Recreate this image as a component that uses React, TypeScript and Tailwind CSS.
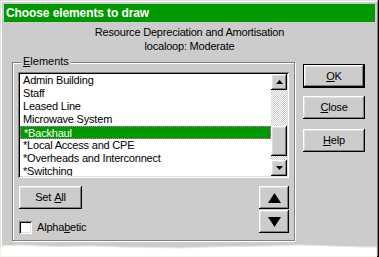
import React from "react";

const ITEMS = [
  "Admin Building",
  "Staff",
  "Leased Line",
  "Microwave System",
  "*Backhaul",
  "*Local Access and CPE",
  "*Overheads and Interconnect",
  "*Switching",
];
const SELECTED = 4;

const FONT = { fontFamily: '"Liberation Sans", Arial, sans-serif' };

// win95 bevels
const RAISED =
  "shadow-[inset_-1px_-1px_0_#000,inset_1px_1px_0_#fff,inset_-2px_-2px_0_#808080,inset_2px_2px_0_#dfdfdf]";
const SUNKEN =
  "shadow-[inset_1px_1px_0_#808080,inset_-1px_-1px_0_#fff,inset_2px_2px_0_#000,inset_-2px_-2px_0_#dfdfdf]";

function Btn({ children, className = "" }: { children: React.ReactNode; className?: string }) {
  return (
    <div
      className={`flex items-center justify-center bg-[#cccccc] text-[11px] tracking-[-0.2px] text-black ${RAISED} ${className}`}
    >
      {children}
    </div>
  );
}

function Tri({ up, w, h }: { up?: boolean; w: number; h: number }) {
  return (
    <svg width={w} height={h} viewBox={`0 0 ${w} ${h}`}>
      <polygon points={up ? `0,${h} ${w / 2},0 ${w},${h}` : `0,0 ${w / 2},${h} ${w},0`} fill="#000" />
    </svg>
  );
}

export default function App() {
  return (
    <div
      className="relative h-[257px] w-[379px] overflow-hidden bg-[#cccccc] shadow-[inset_-1px_-1px_0_#000,inset_1px_1px_0_#dfdfdf,inset_-2px_-2px_0_#808080,inset_2px_2px_0_#fff]"
      style={FONT}
    >
      {/* title bar */}
      <div className="mx-[4px] mt-[4px] flex h-[18px] w-[371px] items-center bg-[#009900] pl-[2px] text-[12px] font-bold tracking-[-0.1px] text-white">
        Choose elements to draw
      </div>

      {/* subtitle */}
      <div className="mt-[3px] text-center text-[11px] leading-[14px] tracking-[-0.2px] text-black">
        <div>Resource Depreciation and Amortisation</div>
        <div>localoop: Moderate</div>
      </div>

      <div className="mt-[9px] flex items-start">
        {/* group box */}
        <div className="relative ml-[12px] h-[179px] w-[283px] border border-[#808080] pl-[5px] pt-[9px] shadow-[1px_1px_0_#fff,inset_1px_1px_0_#fff]">
          <span className="absolute left-[8px] top-[-8px] bg-[#cccccc] px-[2px] text-[11px] leading-[13px] text-black">
            <span className="underline">E</span>lements
          </span>

          {/* listbox */}
          <div className={`flex h-[106px] w-[271px] bg-white p-[2px] ${SUNKEN}`}>
            <div className="w-[251px] overflow-hidden">
              {ITEMS.map((it, i) => (
                <div
                  key={it}
                  className={`h-[13px] whitespace-nowrap pl-[3px] text-[11px] leading-[13px] tracking-[-0.2px] ${
                    i === SELECTED
                      ? "border border-dotted border-[#e070e0] bg-[#009900] pl-[2px] leading-[11px] text-white"
                      : "text-black"
                  }`}
                >
                  {it}
                </div>
              ))}
            </div>
            {/* scrollbar */}
            <div className="flex w-[16px] flex-col">
              <Btn className="h-[16px] w-[16px] shrink-0">
                <Tri up w={7} h={4} />
              </Btn>
              <div className="h-[36px] bg-[image:repeating-conic-gradient(#fff_0%_25%,#cccccc_0%_50%)] bg-size-[2px_2px]" />
              <Btn className="h-[30px] w-[16px] shrink-0">{null}</Btn>
              <div className="h-[4px] bg-[image:repeating-conic-gradient(#fff_0%_25%,#cccccc_0%_50%)] bg-size-[2px_2px]" />
              <Btn className="h-[16px] w-[16px] shrink-0">
                <Tri w={7} h={4} />
              </Btn>
            </div>
          </div>

          {/* bottom controls */}
          <div className="mt-[8px] flex w-[271px] justify-between">
            <div className="ml-[1px] flex flex-col">
              <Btn className="h-[23px] w-[63px]">
                Set <span className="ml-[3px] underline">A</span>ll
              </Btn>
              <div className="mt-[10px] flex items-center">
                <div className={`h-[13px] w-[13px] bg-white ${SUNKEN}`} />
                <span className="ml-[5px] text-[11px] tracking-[-0.2px] text-black">
                  Alpha<span className="underline">b</span>etic
                </span>
              </div>
            </div>
            <div className="flex flex-col gap-[1px]">
              <Btn className="h-[23px] w-[30px]">
                <Tri up w={13} h={10} />
              </Btn>
              <Btn className="h-[23px] w-[30px]">
                <Tri w={13} h={10} />
              </Btn>
            </div>
          </div>
        </div>

        {/* right buttons */}
        <div className="ml-[8px] mt-[2px] flex flex-col">
          <div className="border border-black">
            <Btn className="h-[22px] w-[60px]">
              <span className="underline">O</span>K
            </Btn>
          </div>
          <Btn className="mt-[8px] h-[23px] w-[62px]">
            <span className="underline">C</span>lose
          </Btn>
          <Btn className="mt-[10px] h-[23px] w-[62px]">
            <span className="underline">H</span>elp
          </Btn>
        </div>
      </div>

      {/* torn paper edge */}
      <svg className="absolute bottom-0 left-0" width={377} height={14} viewBox="0 0 377 14">
        <path
          d="M0 3 L20 2 L40 3 L60 3.5 L90 3 L120 4 L150 4.5 L180 5 L210 4 L240 3.5 L270 3 L300 2 L330 3 L360 4 L377 4 L377 14 L0 14 Z"
          fill="#fff"
          stroke="#f7e6cf"
          strokeWidth={1}
        />
      </svg>
    </div>
  );
}
